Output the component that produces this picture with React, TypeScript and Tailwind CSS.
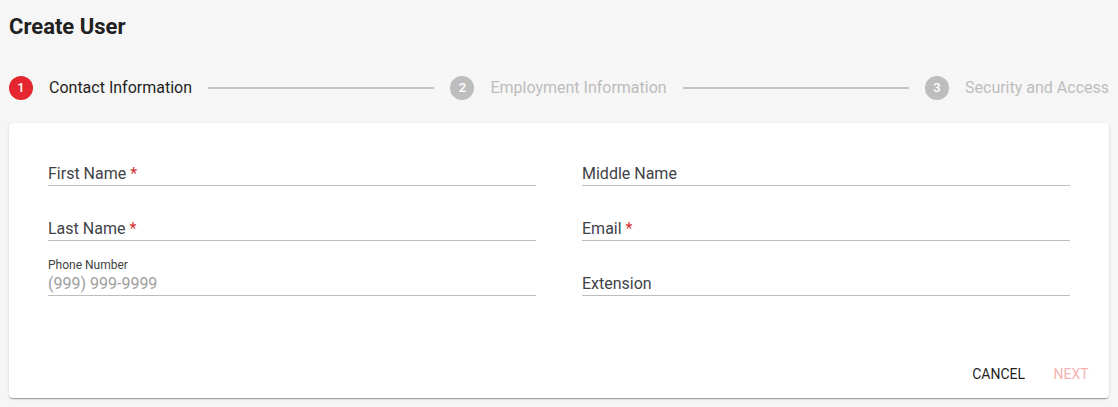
import { Fragment } from "react";

type Step = { n: number; label: string; active?: boolean };

const steps: Step[] = [
  { n: 1, label: "Contact Information", active: true },
  { n: 2, label: "Employment Information" },
  { n: 3, label: "Security and Access" },
];

type FieldProps = {
  label: string;
  required?: boolean;
  small?: string;
  placeholder?: string;
};

function Field({ label, required, small, placeholder }: FieldProps) {
  return (
    <div className="flex flex-col">
      <div className="h-4 text-xs leading-4 text-[#424242]">{small}</div>
      <div className="h-[23px] border-b border-[#bdbdbd] text-base leading-[21px]">
        {placeholder ? (
          <span className="text-[#9e9e9e]">{placeholder}</span>
        ) : (
          <span className="text-[#3f4347]">
            {label}
            {required ? <span className="ml-1 text-[#d32f2f]">*</span> : null}
          </span>
        )}
      </div>
    </div>
  );
}

export default function App() {
  return (
    <div className="min-h-[407px] bg-[#f6f6f6] px-[9px] pt-[13px] font-['Roboto',sans-serif]">
      <h1 className="text-[22px] font-bold leading-7 text-[#212121]">Create User</h1>

      {/* stepper */}
      <div className="mt-[35px] flex h-6 items-center">
        {steps.map((step, i) => (
          <Fragment key={step.n}>
            {i > 0 ? <div className="mx-4 h-[2px] flex-1 bg-[#c4c4c4]" /> : null}
            <div className="flex items-center gap-4">
              <span
                className={`flex h-6 w-6 items-center justify-center rounded-full text-[13px] font-medium text-white ${
                  step.active ? "bg-[#e4262e]" : "bg-[#bdbdbd]"
                }`}
              >
                {step.n}
              </span>
              <span
                className={`text-base ${step.active ? "text-[#1f1f1f]" : "text-[#bdbdbd]"}`}
              >
                {step.label}
              </span>
            </div>
          </Fragment>
        ))}
      </div>

      {/* form card */}
      <div className="mt-[23px] rounded bg-white shadow-[0_2px_1px_-1px_rgba(0,0,0,0.2),0_1px_1px_0_rgba(0,0,0,0.14),0_1px_3px_0_rgba(0,0,0,0.12)]">
        <div className="grid grid-cols-2 gap-x-[46px] gap-y-4 px-[39px] pt-6">
          <Field label="First Name" required />
          <Field label="Middle Name" />
          <Field label="Last Name" required />
          <Field label="Email" required />
          <Field label="Phone Number" small="Phone Number" placeholder="(999) 999-9999" />
          <Field label="Extension" />
        </div>
        <div className="mt-[60px] flex justify-end gap-[6px] pb-[6px] pr-[6px]">
          <button
            type="button"
            className="h-9 min-w-16 px-2 text-sm font-normal uppercase text-[#1f1f1f]"
          >
            Cancel
          </button>
          <button
            type="button"
            disabled
            className="h-9 min-w-16 px-2 text-sm font-normal uppercase text-[#f5b3b3]"
          >
            Next
          </button>
        </div>
      </div>
    </div>
  );
}
